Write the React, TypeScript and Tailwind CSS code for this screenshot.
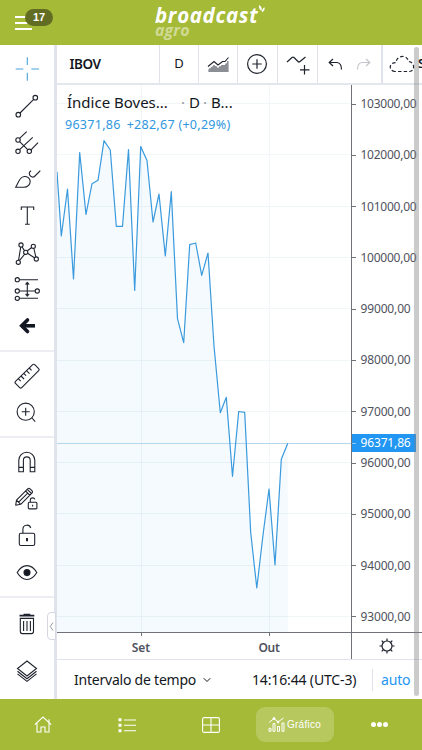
import type { ReactNode } from "react";
import { ChevronDown } from "lucide-react";

const points = [
  [57, 171.7], [61.3, 236], [67.5, 189], [73.5, 279], [79.7, 152.5], [86, 214.5], [92, 183.7], [98, 180.3],
  [104, 140.7], [110.3, 150], [116.3, 226.3], [122.5, 226.3], [128.5, 149.5], [134.7, 290.5], [140.7, 146.5],
  [147, 160.5], [153, 222], [159, 194], [165.3, 256], [171.3, 191.7], [177.5, 318.7], [183.7, 342.7],
  [189.7, 244.7], [195.7, 243], [201.7, 275.3], [208, 253], [214, 346], [220.3, 412.7], [226.3, 397.3],
  [232.5, 476.3], [238.7, 411.5], [244.7, 412.3], [250.7, 532.5], [256.8, 588], [263, 535], [269, 489],
  [275, 565], [281.3, 459.3], [287.7, 443.5],
];

const prices = [
  "103000,00", "102000,00", "101000,00", "100000,00", "99000,00", "98000,00",
  "97000,00", "96000,00", "95000,00", "94000,00", "93000,00",
];

function Tool({ children }: { children: ReactNode }) {
  return (
    <button className="flex h-[36.7px] w-full shrink-0 items-center justify-center">
      <svg width="30" height="30" viewBox="0 0 30 30" fill="none" stroke="#1e222d" strokeWidth="1.1">
        {children}
      </svg>
    </button>
  );
}

function Sidebar() {
  return (
    <div className="relative flex w-[57px] shrink-0 flex-col border-r-[3px] border-[#e0e3eb] bg-white">
      <div className="h-[307px] shrink-0 border-b-2 border-[#eceef4] pt-[6px]">
        <Tool>
          <path stroke="#45a3d9" d="M3.7 15h7.6M19.3 15H27M15.3 3.3V11M15.3 18.7v8" />
        </Tool>
        <Tool>
          <path d="M8 22L21.7 8.3" />
          <circle cx="6.3" cy="23.7" r="2.3" />
          <circle cx="23.3" cy="6.7" r="2.3" />
        </Tool>
        <Tool>
          <path d="M7.6 10.4l7.1-6.7M7.6 21.7L20.7 9.3M19 21.8l7-7.1M7.6 13.7l8.1 8" />
          <circle cx="6" cy="12" r="2.2" />
          <circle cx="6" cy="23.3" r="2.2" />
          <circle cx="17.3" cy="23.3" r="2.2" />
        </Tool>
        <Tool>
          <path d="M3.7 23.3C5.3 20.5 6.5 17 8.6 14.5c2-2.5 5.4-2.7 7.7-.8 2.4 2 2.5 5.3.3 7.6-1.7 1.8-3.2 2-5 2z" />
          <path d="M19 6.8c-2 1.3-2.2 3.2-.9 4.8 1.2 1.5 3.2 2 4.4.9l5.8-5.9" />
        </Tool>
        <Tool>
          <path d="M9.3 9v-3h12.4v3M15.3 6V23.3M13 23.3h4.7" />
        </Tool>
        <Tool>
          <path d="M8.7 9.2L6.6 22M10.1 9l2.4 3.6M12.7 16.2l-5.1 6.2M15.4 12.8l4.1-3M21.9 10.5l1.9 8.3M15.6 15.3l6.8 4.5" />
          <circle cx="9" cy="7" r="2.1" />
          <circle cx="21.3" cy="8.3" r="2.1" />
          <circle cx="6.3" cy="24.3" r="2.1" />
          <circle cx="24.3" cy="21" r="2.1" />
          <circle cx="13.7" cy="14.3" r="2.1" />
        </Tool>
        <Tool>
          <path d="M7.5 5.7H26M7.5 17h15.7M7.5 24.3H26M15.3 8.5v13" />
          <path fill="#1e222d" strokeWidth=".6" d="M13.4 10.3l1.9-2.4 1.9 2.4zM13.4 20.2l1.9 2.4 1.9-2.4z" />
          <circle cx="5.3" cy="5.7" r="2.1" />
          <circle cx="5.3" cy="17" r="2.1" />
          <circle cx="5.3" cy="24.3" r="2.1" />
          <circle cx="25.3" cy="17" r="2.1" />
        </Tool>
        <Tool>
          <path strokeWidth="3.6" stroke="#131722" d="M9.5 14.8H23" />
          <path strokeWidth="3.6" stroke="#131722" strokeLinejoin="miter" strokeLinecap="round" d="M15.5 9l-5.8 5.8 5.8 5.8" />
        </Tool>
      </div>
      <div className="h-[86px] shrink-0 border-b-2 border-[#eceef4] pt-[5.5px]">
        <Tool>
          <path strokeLinejoin="round" d="M20.7 3.7q1-1 2 0l4 4q1 1 0 2L9.7 26.6q-1 1-2 0l-4.2-4.2q-1-1 0-2z" />
          <path d="M6.3 17.7l2.4 2.4M9 15l3 3M11.7 12.3l2.4 2.4M14.5 9.6l3 3M17.2 7l2.4 2.4" />
        </Tool>
        <Tool>
          <circle cx="13.7" cy="13.7" r="8.6" />
          <path d="M13.7 9.7v8M9.7 13.7h8M20 20l3.2 3.6" />
        </Tool>
      </div>
      <div className="h-[160px] shrink-0 border-b-2 border-[#eceef4] pt-[5.5px]">
        <Tool>
          <path d="M6.8 24.7V13.3a8 8 0 0 1 16 0v11.4h-4.6V13.3a3.3 3.3 0 0 0-6.8 0v11.4zM6.8 20.4h4.6M18.2 20.4h4.6" />
        </Tool>
        <Tool>
          <path strokeLinejoin="round" d="M3.7 21.2l.8-5.1L15.7 4.9q1.2-1.2 2.4 0l1.8 1.8q1.2 1.2 0 2.4L8.7 20.3zM4.5 16.1l4.2 4.2M13.6 7l4.3 4.3M15.3 5.3l4.2 4.2M6.4 18.3l9.3-9.2" />
          <rect x="16.3" y="18.3" width="8.6" height="6.6" rx="1" />
          <path d="M18.3 18.2V16c0-2.6 3.8-2.8 4.6-.6M20.6 20.8v1.8" />
        </Tool>
        <Tool>
          <rect x="7.3" y="13.3" width="15.4" height="12.2" rx="1.6" />
          <path d="M10.9 13.2V9.4c0-5.2 6.7-5.6 7.8-1.4" />
          <path strokeWidth="2" d="M15 17.9v3.3" />
        </Tool>
        <Tool>
          <path d="M5.2 15.6C10.5 6.3 19.5 6.3 24.8 15.6 19.5 24.8 10.5 24.8 5.2 15.6z" />
          <circle cx="15" cy="15.6" r="3" fill="#131722" />
        </Tool>
      </div>
      <div className="shrink-0 pt-[7.5px]">
        <Tool>
          <path strokeWidth="1.8" d="M7.5 6.6h14.8M11.5 5.6h6.8" />
          <path d="M8.3 9.4h13.2v13.2q0 2-2 2h-9.2q-2 0-2-2zM11.6 12v10M15 12v10M18.4 12v10" />
        </Tool>
      </div>
      <div className="mt-[10px] shrink-0">
        <Tool>
          <path d="M15 5l9.5 7.5L15 20l-9.5-7.5zM5.5 15.2l9.5 7.5 9.5-7.5M5.5 17.9l9.5 7.5 9.5-7.5" />
        </Tool>
      </div>
      <div className="absolute top-[567px] left-[47px] flex h-[28px] w-[9px] items-center justify-center rounded-l-[4px] border border-[#d5d8e0] bg-white">
        <svg width="5" height="9" viewBox="0 0 5 9" fill="none" stroke="#9598a1">
          <path d="M4 .5L1.2 4.5 4 8.5" />
        </svg>
      </div>
    </div>
  );
}

function TopToolbar() {
  return (
    <div className="flex h-[40px] shrink-0 overflow-hidden border-b-2 border-[#e4e6ee] text-[#131722]">
      <div className="flex w-[103px] shrink-0 items-center border-r border-[#e0e3eb] pl-[12.5px] text-[13.5px] font-semibold tracking-[-0.5px]">IBOV</div>
      <div className="flex w-[39px] shrink-0 items-center justify-center border-r border-[#e0e3eb] text-[13px]">D</div>
      <div className="flex w-[39px] shrink-0 items-center justify-center border-r border-[#e0e3eb]">
        <svg width="22" height="20" viewBox="0 0 22 20" fill="none" stroke="#1e222d" strokeWidth="1.1">
          <path fill="#b4b6bb" stroke="none" d="M1 18v-2.5l6-4.5 4 3 4-3h3l3-4v11z" />
          <path stroke="#50535e" strokeWidth=".8" d="M3 18v-3.5M5 18v-5M7 18v-7M9 18v-6M11 18v-4.5M13 18v-6M15 18v-7M17 18v-7M19 18V9.5M21 18V7" />
          <path d="M1 12.5L7 7.5l4 3.5 4.5-3.5H18l3.5-4" />
        </svg>
      </div>
      <div className="flex w-[40px] shrink-0 items-center justify-center border-r border-[#e0e3eb] pr-[1px]">
        <svg width="22" height="22" viewBox="0 0 22 22" fill="none" stroke="#1e222d" strokeWidth="1.2">
          <circle cx="11" cy="11" r="9.4" />
          <path d="M11 6.3v9.4M6.3 11h9.4" />
        </svg>
      </div>
      <div className="flex w-[40px] shrink-0 items-center justify-center border-r border-[#e0e3eb]">
        <svg width="24" height="22" viewBox="0 0 24 22" fill="none" stroke="#1e222d" strokeWidth="1.2">
          <path d="M1 9l5-4.5Q7 3.6 8 4.5l4 4q1 1 2 0L19.5 4M18.5 12v9.5M14 16.8h9.5" />
        </svg>
      </div>
      <div className="flex w-[65px] shrink-0 items-center gap-[13px] border-r-2 border-[#e0e3eb] pl-[10px]">
        <svg width="15" height="13" viewBox="0 0 15 13" fill="none" stroke="#1e222d" strokeWidth="1.2">
          <path d="M5 1L1.2 4.5 5 8M1.2 4.5H9q4.5.5 4.5 7" />
        </svg>
        <svg width="15" height="13" viewBox="0 0 15 13" fill="none" stroke="#c3c5cb" strokeWidth="1.2">
          <path d="M10 1l3.8 3.5L10 8M13.8 4.5H6Q1.5 5 1.5 11.5" />
        </svg>
      </div>
      <div className="flex shrink-0 items-center pl-[6px]">
        <svg width="27" height="20" viewBox="0 0 27 20" fill="none" stroke="#1e222d" strokeWidth="1.2" strokeDasharray="3.4 2.2">
          <path d="M6 17.5C-.5 17-.5 8.5 6.8 8.7 8 .5 18.5.5 19.6 7.6c6 0 7 9.5 1 9.9z" />
        </svg>
        <span className="ml-[2px] text-[13px] font-semibold">S</span>
      </div>
    </div>
  );
}

function Chart() {
  const line = points.map((p) => p.join(",")).join(" ");
  return (
    <div className="relative flex h-[547px] shrink-0">
      <svg className="shrink-0" width="294" height="547" viewBox="57 85 294 547" fill="none">
        {prices.map((p, i) => (
          <path key={p} stroke="#f1f6f8" d={`M57 ${Math.floor(103.5 + i * 51.3) + 0.5}H351`} />
        ))}
        <path stroke="#f1f6f8" d="M141.5 85V632M269.5 85V632" />
        <polygon fill="#2196f3" fillOpacity=".05" points={`57,632 ${line} 287.7,632`} />
        <path stroke="#b5d7ee" d="M57 443.5H351" />
        <polyline stroke="#3a9add" strokeWidth="1.2" strokeLinejoin="round" points={line} />
      </svg>
      <div className="h-[547px] w-[71px] shrink-0 border-l border-[#6f727b] text-[12px] leading-none text-[#50535e]">
        {prices.map((p, i) => (
          <div key={p} className={i === 0 ? "flex h-[44.6px] items-end pb-[12.6px]" : "flex h-[51.3px] items-end pb-[12.6px]"}>
            <span className="flex h-[26px] items-center">
              <span className="mr-[4.5px] h-px w-[4px] bg-[#6f727b]" />
              <span className={p.length === 9 ? "tracking-[-0.25px]" : "tracking-[-0.15px]"}>{p}</span>
            </span>
          </div>
        ))}
      </div>
      <div className="absolute top-[349px] left-[295px] flex h-[18px] w-[64px] items-center bg-[#2196f3] text-[12px] leading-none tracking-[-0.15px] text-white">
        <span className="mr-[4.5px] h-px w-[4px] bg-[#8cc8f8]" />
        96371,86
      </div>
      <div className="absolute top-[8px] left-[10px] flex items-baseline text-[15px] leading-[18px] whitespace-nowrap text-[#131722]">
        <span className="w-[114px]">Índice Boves...</span>
        <span className="w-[8px] text-[#9598a1]">·</span>
        <span className="w-[14px]">D</span>
        <span className="w-[8px] text-[#9598a1]">·</span>
        <span>B...</span>
      </div>
      <div className="absolute top-[31.5px] left-[8px] flex gap-[6px] text-[12.5px] leading-[15px] tracking-[0.28px] whitespace-nowrap text-[#2f97e0]">
        <span>96371,86</span>
        <span>+282,67 (+0,29%)</span>
      </div>
    </div>
  );
}

function TimeAxis() {
  return (
    <div className="flex h-[28px] shrink-0 border-t border-b border-t-[#6f727b] border-b-[#e0e3eb] text-[12px] font-semibold text-[#50535e]">
      <div className="flex w-[294px] shrink-0 pl-[64px]">
        <div className="flex w-[40px] flex-col items-center">
          <span className="h-[3px] w-px bg-[#6f727b]" />
          <span className="mt-[4px] leading-[16px]">Set</span>
        </div>
        <div className="ml-[88px] flex w-[40px] flex-col items-center">
          <span className="h-[3px] w-px bg-[#6f727b]" />
          <span className="mt-[4px] leading-[16px] tracking-[-0.3px]">Out</span>
        </div>
      </div>
      <div className="flex w-[71px] items-center border-l border-[#6f727b] pl-[27px]">
        <svg width="16" height="16" viewBox="0 0 16 16" fill="none" stroke="#1e222d" strokeWidth="1.2">
          <circle cx="8" cy="8" r="5" />
          <path d="M8 3V.5M8 13v2.5M3 8H.5M13 8h2.5M4.5 4.5L2.7 2.7M11.5 4.5l1.8-1.8M4.5 11.5l-1.8 1.8M11.5 11.5l1.8 1.8" />
        </svg>
      </div>
    </div>
  );
}

export default function App() {
  return (
    <div className="flex h-[750px] w-[422px] flex-col overflow-hidden bg-white font-['Trebuchet_MS','Noto_Sans',sans-serif]">
      <header className="relative h-[45px] shrink-0 bg-[#a5ba37]">
        <div className="flex flex-col gap-[4px] pt-[16px] pl-[15px]">
          <span className="h-[2px] w-[17px] bg-white" />
          <span className="h-[2px] w-[17px] bg-white" />
          <span className="h-[2px] w-[17px] bg-white" />
        </div>
        <span className="absolute top-[9px] left-[25px] flex h-[17px] w-[28px] items-center justify-center rounded-full bg-[#626d23] font-['Liberation_Sans',sans-serif] text-[11px] font-bold text-white">17</span>
        <div className="absolute top-[5px] left-[155px] font-['Open_Sans',sans-serif] font-bold italic">
          <div className="h-[18px] text-[20.5px] leading-[20px] tracking-[0.65px] whitespace-nowrap text-white">broadcast</div>
          <div className="h-[15px] text-[16px] leading-[15px] tracking-[0.1px] text-[#d0da95]">agro</div>
        </div>
        <svg className="absolute top-[5px] left-[258px]" width="8" height="8" viewBox="0 0 8 8" fill="#fff">
          <path d="M1 0q3.4 1.6 2.6 6Q.3 3.6 1 0zM6.6 2.2q.6 3.2-2.6 5.2Q3.4 4 6.6 2.2z" />
        </svg>
      </header>

      <div className="relative flex h-[654px] shrink-0">
        <Sidebar />
        <div className="flex w-[365px] shrink-0 flex-col overflow-hidden">
          <TopToolbar />
          <Chart />
          <TimeAxis />
          <div className="flex h-[39px] items-center text-[14px] whitespace-nowrap text-[#131722]">
            <span className="w-[127px] pl-[17px] text-left tracking-[-0.22px]">Intervalo de tempo</span>
            <ChevronDown size={12} strokeWidth={2} className="ml-[17px]" />
            <span className="ml-[39px] w-[105px] tracking-[-0.15px]">14:16:44 (UTC-3)</span>
            <span className="ml-[15px] h-[22px] w-px bg-[#e0e3eb]" />
            <span className="ml-[8px] tracking-[-0.15px] text-[#2196f3]">auto</span>
          </div>
        </div>
        <span className="absolute top-[2px] left-[414px] h-[649px] w-[5px] rounded-full bg-[#7d7d7d]/40" />
      </div>

      <nav className="flex h-[51px] shrink-0 items-center bg-[#a5ba37]">
        <div className="flex w-[85px] justify-center">
          <svg width="18" height="17" viewBox="0 0 18 17" fill="none" stroke="#fff" strokeWidth="1.1">
            <path d="M.8 8.7L9 1l8.2 7.7M3 7v9h4v-5h4v5h4V7M15 6.5V3.2" />
          </svg>
        </div>
        <div className="flex w-[84px] justify-center">
          <svg width="18" height="16" viewBox="0 0 18 16" fill="none" stroke="#fff" strokeWidth="1.1">
            <path d="M6 3h12M6 8.3h12M6 13.7h12" />
            <path strokeWidth="3" d="M.5 2.7h3M.5 8.2h3M.5 13.7h3" />
          </svg>
        </div>
        <div className="flex w-[84px] justify-center">
          <svg width="18" height="16" viewBox="0 0 18 16" fill="none" stroke="#fff" strokeWidth="1.1">
            <rect x=".6" y=".6" width="16.8" height="14.8" rx="1.5" />
            <path d="M9 .6v14.8M.6 8h16.8" />
          </svg>
        </div>
        <div className="ml-[3px] flex h-[35px] w-[78px] items-center gap-[2px] rounded-[9px] bg-[#b7c85f] pl-[12px] text-white">
          <svg width="17" height="15" viewBox="0 0 17 15" fill="none" stroke="#fff" strokeWidth="1">
            <path d="M1 5.5l5-4L10 5l5.5-4M1 14.3v-3h2v3zM5 14.3V6.6h2v7.7zM9.5 14.3V9.5h2v4.8zM14 14.3V6h2v8.3z" />
            <circle cx="6" cy="1.6" r="1" fill="#fff" />
            <circle cx="10" cy="5" r="1" fill="#fff" />
          </svg>
          <span className="font-['Liberation_Sans',sans-serif] text-[10px] tracking-[0.25px]">Gráfico</span>
        </div>
        <div className="ml-[37px] flex gap-[1px]">
          <span className="size-[5px] rounded-full bg-white" />
          <span className="size-[5px] rounded-full bg-white" />
          <span className="size-[5px] rounded-full bg-white" />
        </div>
      </nav>
    </div>
  );
}
